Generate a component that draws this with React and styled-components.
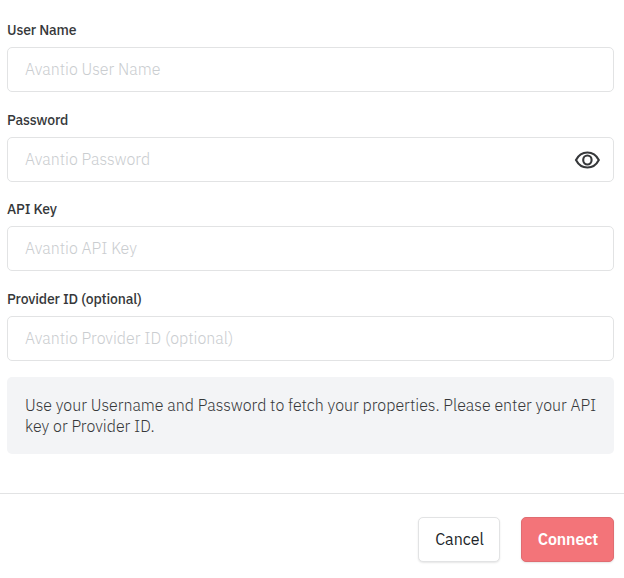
import React from "react"
import styled, { createGlobalStyle } from "styled-components"

const colors = {
  text: "#36383a",
  placeholder: "#cacdd0",
  border: "#e2e3e4",
  note: "#f3f4f6",
  coral: "#f37479",
}

const GlobalStyle = createGlobalStyle`
  * {
    box-sizing: border-box;
  }
  body {
    margin: 0;
    background: #fff;
    color: ${colors.text};
    font-family: "IBM Plex Sans", Roboto, "Liberation Sans", sans-serif;
    font-size: 16px;
  }
`
const Form = styled.form`
  min-height: 578px;
  padding-top: 20px;
`
const Fields = styled.div`
  display: flex;
  flex-direction: column;
  gap: 17.67px;
  padding: 0 10px 0 7px;
`
const Field = styled.div`
  height: 72px;
`
const Label = styled.label`
  display: block;
  height: 27px;
  font-size: 14px;
  font-weight: 500;
  line-height: 21px;
  letter-spacing: -0.15px;
`
const InputBox = styled.div`
  display: flex;
  align-items: center;
  height: 45px;
  padding: 0 13px 1px 17px;
  border: 1px solid ${colors.border};
  border-radius: 5px;
`
const Input = styled.input`
  flex: 1;
  min-width: 0;
  padding: 0;
  border: 0;
  outline: 0;
  background: transparent;
  color: ${colors.text};
  font: inherit;
  font-weight: 300;

  &::placeholder {
    color: ${colors.placeholder};
    opacity: 1;
  }
`
const EyeButton = styled.button`
  display: flex;
  padding: 2px 0 0;
  border: 0;
  background: none;
  color: ${colors.text};
`
const Note = styled.p`
  height: 77px;
  margin: 16px 10px 0 7px;
  padding: 18px 16px 17px 18px;
  border-radius: 5px;
  background: ${colors.note};
  font-weight: 300;
  line-height: 21px;
`
const Footer = styled.div`
  display: flex;
  justify-content: flex-end;
  gap: 21px;
  margin-top: 39px;
  padding: 23px 10px 0 0;
  border-top: 1px solid ${colors.border};
`
const Button = styled.button`
  width: ${props => (props.$primary ? "93px" : "82px")};
  height: 45px;
  padding: 0 0 0 1px;
  border: 1px solid ${props => (props.$primary ? "#e06c71" : colors.border)};
  border-radius: 5px;
  background: ${props => (props.$primary ? colors.coral : "#fff")};
  box-shadow: 0 1px 2px rgba(0, 0, 0, 0.1);
  color: ${props => (props.$primary ? "#fff" : "#212529")};
  font: inherit;
  font-weight: ${props => (props.$primary ? 600 : 400)};
  letter-spacing: ${props => (props.$primary ? "-0.1px" : "0")};
`

const EyeIcon = () => (
  <svg width="26" height="18" viewBox="0 0 26 18" fill="none" stroke="currentColor" strokeWidth="2.1">
    <path d="M2 9C4.4 4.3 8.6 1.5 13.4 1.5S22.4 4.3 24.8 9C22.4 13.7 18.2 16.5 13.4 16.5S4.4 13.7 2 9Z" />
    <ellipse cx="13.4" cy="9" rx="4.2" ry="4.5" />
  </svg>
)

const fields = [
  { id: "username", label: "User Name", placeholder: "Avantio User Name" },
  { id: "password", label: "Password", placeholder: "Avantio Password", type: "password" },
  { id: "apiKey", label: "API Key", placeholder: "Avantio API Key" },
  { id: "providerId", label: "Provider ID (optional)", placeholder: "Avantio Provider ID (optional)" },
]

const App = () => (
  <>
    <GlobalStyle />
    <Form>
      <Fields>
        {fields.map(({ id, label, placeholder, type }) => (
          <Field key={id}>
            <Label htmlFor={id}>{label}</Label>
            <InputBox>
              <Input id={id} type={type || "text"} placeholder={placeholder} />
              {type === "password" && (
                <EyeButton type="button" aria-label="Show password">
                  <EyeIcon />
                </EyeButton>
              )}
            </InputBox>
          </Field>
        ))}
      </Fields>
      <Note>
        Use your Username and Password to fetch your properties. Please enter
        your API key or Provider ID.
      </Note>
      <Footer>
        <Button type="button">Cancel</Button>
        <Button type="button" $primary>
          Connect
        </Button>
      </Footer>
    </Form>
  </>
)

export default App
